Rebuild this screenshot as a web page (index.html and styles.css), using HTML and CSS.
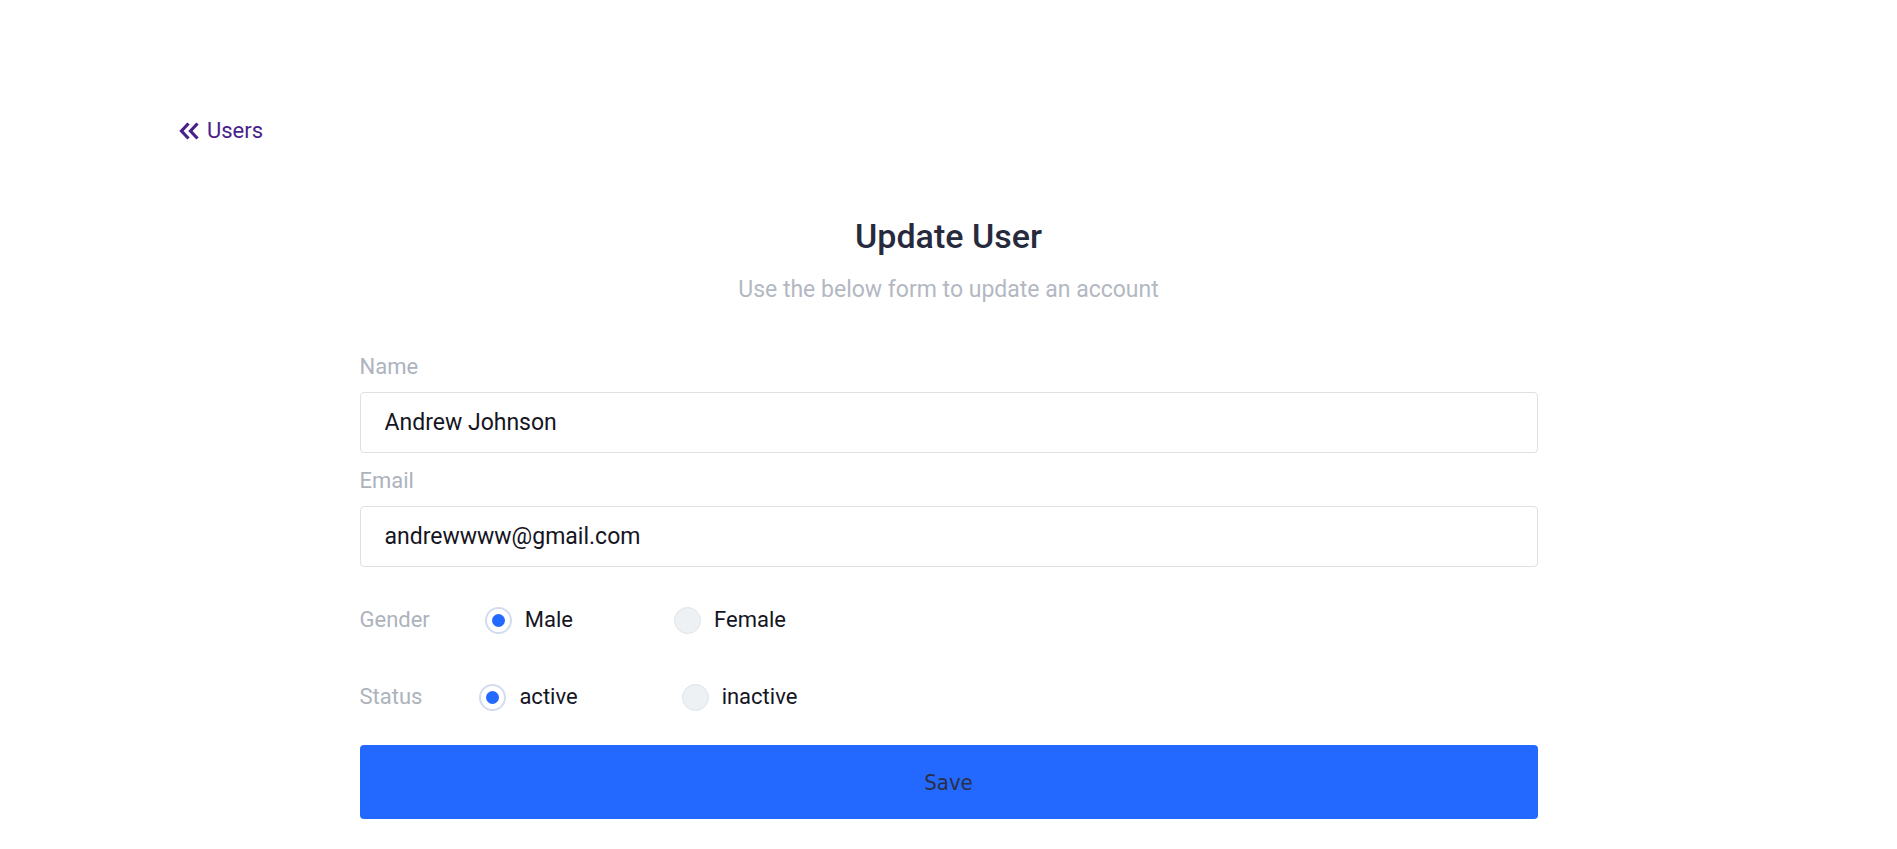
FILE: index.html
```html
<!DOCTYPE html>
<html lang="en">
<head>
<meta charset="utf-8">
<title>Update User</title>
<link rel="stylesheet" href="styles.css">
</head>
<body>
<div class="page">
  <a class="back" href="#">
    <svg class="back-icon" width="21" height="18" viewBox="0 0 21 18" aria-hidden="true">
      <path d="M9.5 1.5 L2.5 9 L9.5 16.5" fill="none" stroke="currentColor" stroke-width="3.2"/>
      <path d="M18.5 1.5 L11.5 9 L18.5 16.5" fill="none" stroke="currentColor" stroke-width="3.2"/>
    </svg>
    <span>Users</span>
  </a>

  <div class="form-wrap">
    <h1 class="title">Update User</h1>
    <p class="subtitle">Use the below form to update an account</p>

    <form class="form">
      <label class="field-label" for="name">Name</label>
      <input class="field" id="name" type="text" value="Andrew Johnson">

      <label class="field-label" for="email">Email</label>
      <input class="field" id="email" type="text" value="andrewwww@gmail.com">

      <div class="radio-row gender">
        <span class="row-label">Gender</span>
        <label class="opt"><span class="radio checked"></span><span>Male</span></label>
        <label class="opt"><span class="radio"></span><span>Female</span></label>
      </div>

      <div class="radio-row status">
        <span class="row-label">Status</span>
        <label class="opt"><span class="radio checked"></span><span>active</span></label>
        <label class="opt"><span class="radio"></span><span>inactive</span></label>
      </div>

      <button class="save" type="button">Save</button>
    </form>
  </div>
</div>
</body>
</html>
```
FILE: styles.css
```css
html {
  overflow-y: scroll;
}
html::-webkit-scrollbar {
  width: 3px;
}
html::-webkit-scrollbar-track {
  background: #f1f1f1;
}
html::-webkit-scrollbar-thumb {
  background: #c1c1c1;
}

body {
  margin: 0;
  font-family: Roboto, "Noto Sans", Arial, sans-serif;
  color: #1f2030;
  background: #ffffff;
}

.page {
  min-height: 986px;
  padding-top: 118px;
}

.back {
  display: inline-flex;
  align-items: center;
  gap: 7px;
  margin-left: 179px;
  color: #4a1f8a;
  text-decoration: none;
  font-size: 22px;
  line-height: 26px;
}
.back-icon {
  display: block;
}

.form-wrap {
  width: 1178px;
  margin: 0 auto;
  padding-top: 72px;
}

.title {
  margin: 0;
  text-align: center;
  font-size: 34px;
  font-weight: 500;
  line-height: 40px;
  color: #272a3d;
}

.subtitle {
  margin: 20px 0 0;
  text-align: center;
  font-size: 23px;
  line-height: 28px;
  color: #b3b8c2;
}

.form {
  display: flex;
  flex-direction: column;
  padding-top: 49px;
}

.field-label {
  font-size: 22px;
  line-height: 28px;
  color: #adb3bd;
  margin-bottom: 11px;
}

.field {
  box-sizing: border-box;
  height: 61px;
  border: 1px solid #dee0e6;
  border-radius: 4px;
  padding: 0 24px;
  font-family: inherit;
  font-size: 23px;
  color: #15151f;
  outline: none;
  margin-bottom: 14px;
}

.radio-row {
  display: flex;
  align-items: center;
  font-size: 22px;
  line-height: 28px;
}
.radio-row.gender {
  margin-top: 25px;
}
.radio-row.status {
  margin-top: 49px;
}

.row-label {
  color: #adb3bd;
  font-size: 22px;
  margin-right: 55px;
}
.status .row-label {
  margin-right: 57px;
}

.opt {
  display: flex;
  align-items: center;
  gap: 13px;
  margin-right: 101px;
  color: #15151f;
}
.status .opt {
  margin-right: 104px;
}

.radio {
  box-sizing: border-box;
  width: 27px;
  height: 27px;
  border-radius: 50%;
  background: #eef1f4;
  border: 1px solid #dfe3e8;
  display: flex;
  align-items: center;
  justify-content: center;
}
.radio.checked {
  background: #ffffff;
  border: 2px solid #d3dcef;
}
.radio.checked::after {
  content: "";
  width: 13px;
  height: 13px;
  border-radius: 50%;
  background: #2469ff;
}

.save {
  margin-top: 34px;
  height: 74px;
  border: none;
  border-radius: 4px;
  background: #2469ff;
  color: #2a2f45;
  font-family: "DejaVu Sans Condensed", "DejaVu Sans", sans-serif;
  font-size: 22px;
  cursor: pointer;
}
```
